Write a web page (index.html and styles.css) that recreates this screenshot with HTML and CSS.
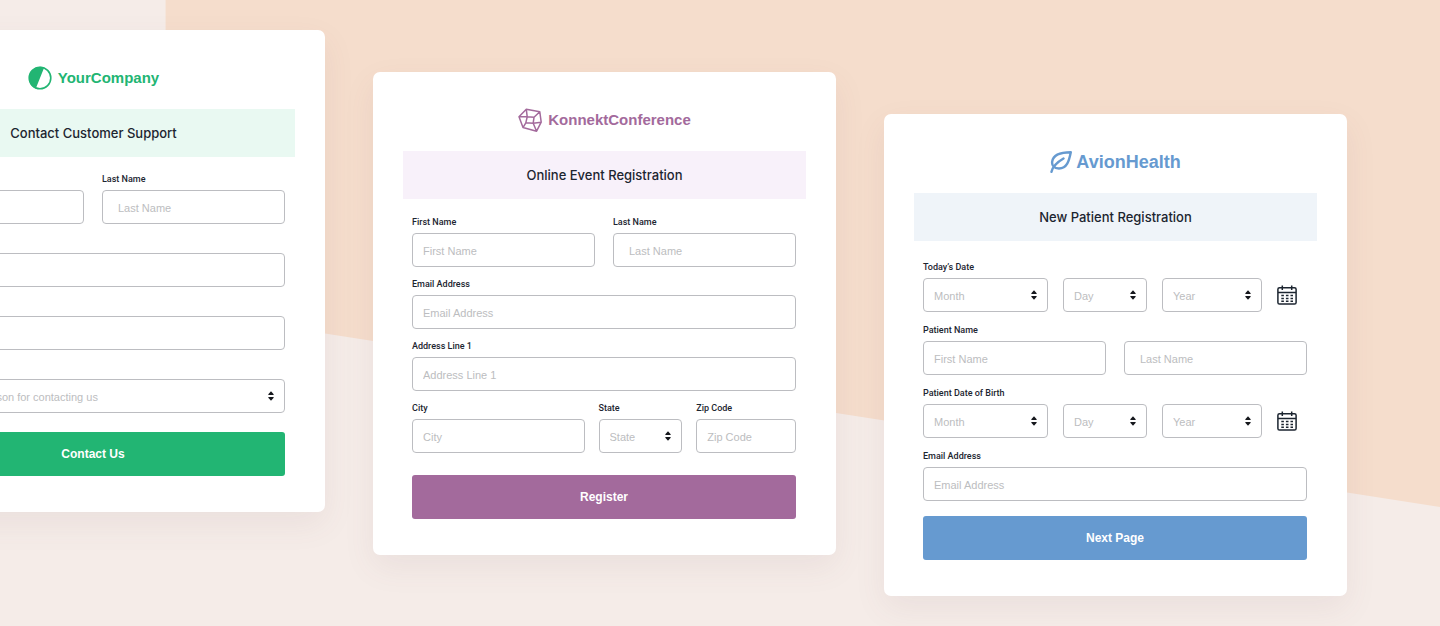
FILE: index.html
```html
<!DOCTYPE html>
<html lang="en">
<head>
<meta charset="utf-8">
<meta name="viewport" content="width=device-width, initial-scale=1">
<title>Form templates</title>
<link rel="stylesheet" href="styles.css">
</head>
<body>
<svg width="0" height="0" class="sprite" aria-hidden="true">
  <symbol id="arrows" viewBox="0 0 6 10"><path d="M3 0.200 5.700 3.300Q6 4 5.200 4H.8Q0 4 .3 3.300ZM3 9.800 5.700 6.700Q6 6 5.200 6H.8Q0 6 .3 6.700Z" fill="#16181d"/></symbol>
  <symbol id="calendar" viewBox="0 0 20 20">
    <rect x=".9" y="2.7" width="18.2" height="16.4" rx="1.6" fill="none" stroke="#1c2530" stroke-width="1.5"/>
    <path d="M1 7.4H19M5.3 .5V5M14.700 .5V5" fill="none" stroke="#1c2530" stroke-width="1.5"/>
    <path d="M4.3 10.6H16M4.3 13.4H16M4.3 16.2H16" fill="none" stroke="#1c2530" stroke-width="1.5" stroke-dasharray="2.6 2"/>
  </symbol>
</svg>
<main class="cards">
  <section class="card card-support">
    <header class="brand">
      <svg width="24" height="24" viewBox="0 0 24 24" aria-hidden="true"><circle cx="12" cy="12" r="10.800" fill="#fff" stroke="currentColor" stroke-width="1.600"/><path d="M16.300 1.300A11.600 11.600 0 0 0 7.700 22.800Z" fill="currentColor"/></svg>
      <span class="brand-name">YourCompany</span>
    </header>
    <h2 class="banner">Contact Customer Support</h2>
    <form class="form">
      <div class="row halves">
        <div class="field"><label for="s-first">First Name</label><input class="control" id="s-first" placeholder="First Name"></div>
        <div class="field"><label for="s-last">Last Name</label><input class="control roomy" id="s-last" placeholder="Last Name"></div>
      </div>
      <div class="field"><label for="s-email">Email</label><input class="control" id="s-email" type="email" placeholder="Email"></div>
      <div class="field"><label for="s-phone">Phone</label><input class="control" id="s-phone" type="tel" placeholder="Phone"></div>
      <div class="field"><label for="s-reason">Reason</label>
        <div class="picker"><select class="control" id="s-reason"><option>Please select reason for contacting us</option></select><svg class="arrows" aria-hidden="true"><use href="#arrows"/></svg></div>
      </div>
      <button class="submit" type="button">Contact Us</button>
    </form>
  </section>

  <section class="card card-event">
    <header class="brand">
      <svg width="24" height="24" viewBox="0 0 24 24" fill="none" stroke="currentColor" stroke-width="1.500" stroke-linejoin="round" aria-hidden="true"><path d="M8.300 1.200 21.800 3.800 23.200 14.200 18.600 23.200 5 19.600 1 8.800ZM1 8.800 9.200 8.800 16 9.300 21.800 3.800M8.300 1.200 9.200 8.800 7.800 14.800 5 19.600M7.800 14.800 15.200 15.200 16 9.300M15.200 15.200 18.600 23.200M15.200 15.200 23.200 14.200"/></svg>
      <span class="brand-name">KonnektConference</span>
    </header>
    <h2 class="banner">Online Event Registration</h2>
    <form class="form">
      <div class="row halves">
        <div class="field"><label for="e-first">First Name</label><input class="control" id="e-first" placeholder="First Name"></div>
        <div class="field"><label for="e-last">Last Name</label><input class="control roomy" id="e-last" placeholder="Last Name"></div>
      </div>
      <div class="field"><label for="e-email">Email Address</label><input class="control" id="e-email" type="email" placeholder="Email Address"></div>
      <div class="field"><label for="e-address">Address Line 1</label><input class="control" id="e-address" placeholder="Address Line 1"></div>
      <div class="row place">
        <div class="field"><label for="e-city">City</label><input class="control" id="e-city" placeholder="City"></div>
        <div class="field"><label for="e-state">State</label>
          <div class="picker"><select class="control" id="e-state"><option>State</option></select><svg class="arrows" aria-hidden="true"><use href="#arrows"/></svg></div>
        </div>
        <div class="field"><label for="e-zip">Zip Code</label><input class="control" id="e-zip" placeholder="Zip Code"></div>
      </div>
      <button class="submit" type="button">Register</button>
    </form>
  </section>

  <section class="card card-health">
    <header class="brand">
      <svg width="22" height="22" viewBox="0 0 22 22" fill="none" stroke="currentColor" stroke-width="2.400" stroke-linecap="round" stroke-linejoin="round" aria-hidden="true"><path d="M20.800 1.200C19 10 17 17.500 9 17.500 4 17.500 1.600 14.500 2.200 10.500 3.200 4 10 1.200 20.800 1.200ZM1.500 20.800C2.500 16.500 6.500 11.500 13.500 7.500"/></svg>
      <span class="brand-name">AvionHealth</span>
    </header>
    <h2 class="banner">New Patient Registration</h2>
    <form class="form">
      <div class="field"><label for="h-month">Today’s Date</label>
        <div class="date">
          <div class="picker"><select class="control" id="h-month"><option>Month</option></select><svg class="arrows" aria-hidden="true"><use href="#arrows"/></svg></div>
          <div class="picker"><select class="control" aria-label="Day"><option>Day</option></select><svg class="arrows" aria-hidden="true"><use href="#arrows"/></svg></div>
          <div class="picker"><select class="control" aria-label="Year"><option>Year</option></select><svg class="arrows" aria-hidden="true"><use href="#arrows"/></svg></div>
          <button class="calendar" type="button" aria-label="Pick today’s date"><svg width="20" height="20"><use href="#calendar"/></svg></button>
        </div>
      </div>
      <div class="field"><label for="h-first">Patient Name</label>
        <div class="row halves">
          <input class="control" id="h-first" placeholder="First Name">
          <input class="control roomy" aria-label="Last Name" placeholder="Last Name">
        </div>
      </div>
      <div class="field"><label for="h-bmonth">Patient Date of Birth</label>
        <div class="date">
          <div class="picker"><select class="control" id="h-bmonth"><option>Month</option></select><svg class="arrows" aria-hidden="true"><use href="#arrows"/></svg></div>
          <div class="picker"><select class="control" aria-label="Birth day"><option>Day</option></select><svg class="arrows" aria-hidden="true"><use href="#arrows"/></svg></div>
          <div class="picker"><select class="control" aria-label="Birth year"><option>Year</option></select><svg class="arrows" aria-hidden="true"><use href="#arrows"/></svg></div>
          <button class="calendar" type="button" aria-label="Pick date of birth"><svg width="20" height="20"><use href="#calendar"/></svg></button>
        </div>
      </div>
      <div class="field"><label for="h-email">Email Address</label><input class="control" id="h-email" type="email" placeholder="Email Address"></div>
      <button class="submit" type="button">Next Page</button>
    </form>
  </section>
</main>
</body>
</html>
```
FILE: styles.css
```css
* { box-sizing: border-box; }

body {
  margin: 0;
  min-height: 100vh;
  overflow: hidden;
  position: relative;
  isolation: isolate;
  background: #f5ece8;
  color: #1c2530;
  font-family: "Liberation Sans", Arial, sans-serif;
}

/* Slanted peach backdrop behind the cards */
body::before {
  content: "";
  position: absolute;
  inset: 0;
  z-index: -1;
  background: #f5ddcc;
  clip-path: polygon(11.5% 0, 100% 0, 100% 81%, 11.5% 49.3%);
}

.sprite { position: absolute; }

.cards {
  display: grid;
  grid-template-columns: repeat(3, minmax(0, 1fr));
  align-items: start;
  gap: 48px;
  margin: 0 93px 0 -138px;
  padding: 30px 0;
}

.card {
  padding: 0 30px 36px;
  border-radius: 7px;
  background: #fff;
  box-shadow: 0 12px 32px rgba(120, 80, 90, 0.08);
}

.card-support { --accent: #22b573; --tint: #e9f9f2; --lead: 13px; --gap: 9px; --tail: 19px; }
.card-event { --accent: #a36a9c; --tint: #f8f1fa; --lead: 14px; --gap: 8px; --tail: 22px; margin-top: 42px; }
.card-health { --accent: #669ad0; --tint: #eff4f9; --lead: 17px; --gap: 9px; --tail: 15px; margin-top: 84px; }

.brand {
  display: flex;
  align-items: center;
  justify-content: center;
  gap: 6px;
  padding: 34px 0 17px;
  color: var(--accent);
}

.brand-name {
  font-size: 15px;
  font-weight: 700;
  line-height: 28px;
}

.card-health .brand { gap: 4px; }
.card-health .brand-name { font-size: 18px; }

.banner {
  margin: 0;
  background: var(--tint);
  font-family: Inter, "Liberation Sans", sans-serif;
  font-size: 13px;
  font-weight: 500;
  line-height: 48px;
  text-align: center;
}

.form {
  display: flex;
  flex-direction: column;
  gap: var(--gap);
  padding: var(--lead) 10px 0 9px;
}

.row, .date { display: grid; }
.halves { grid-template-columns: 1fr 1fr; gap: 18px; }
.place { grid-template-columns: 173fr 84fr 100fr; gap: 14px; }
.date { grid-template-columns: 125fr 84fr 100fr 30fr; gap: 15px; }

.field { min-width: 0; }

label {
  display: block;
  margin-bottom: 2px;
  font-family: Roboto, "Liberation Sans", sans-serif;
  font-size: 9px;
  font-weight: 500;
  line-height: 18px;
}

.control {
  display: block;
  width: 100%;
  height: 34px;
  min-width: 0;
  padding: 2px 10px 0;
  border: 1px solid #bcbdc1;
  border-radius: 4px;
  background: #fff;
  color: #bcbdc0;
  font-family: inherit;
  font-size: 11px;
  appearance: none;
}

.control::placeholder { color: #bcbdc0; opacity: 1; }
.roomy { padding-left: 15px; }

.picker { display: grid; align-items: center; }
.picker > * { grid-area: 1 / 1; }

.arrows {
  justify-self: end;
  width: 6px;
  height: 10px;
  margin-right: 11px;
  pointer-events: none;
}

.calendar {
  display: flex;
  align-items: center;
  padding: 0;
  border: 0;
  background: none;
}

.submit {
  height: 44px;
  margin-top: calc(var(--tail) - var(--gap));
  border: 0;
  border-radius: 3px;
  background: var(--accent);
  color: #fff;
  font-family: inherit;
  font-size: 12px;
  font-weight: 700;
}
```
